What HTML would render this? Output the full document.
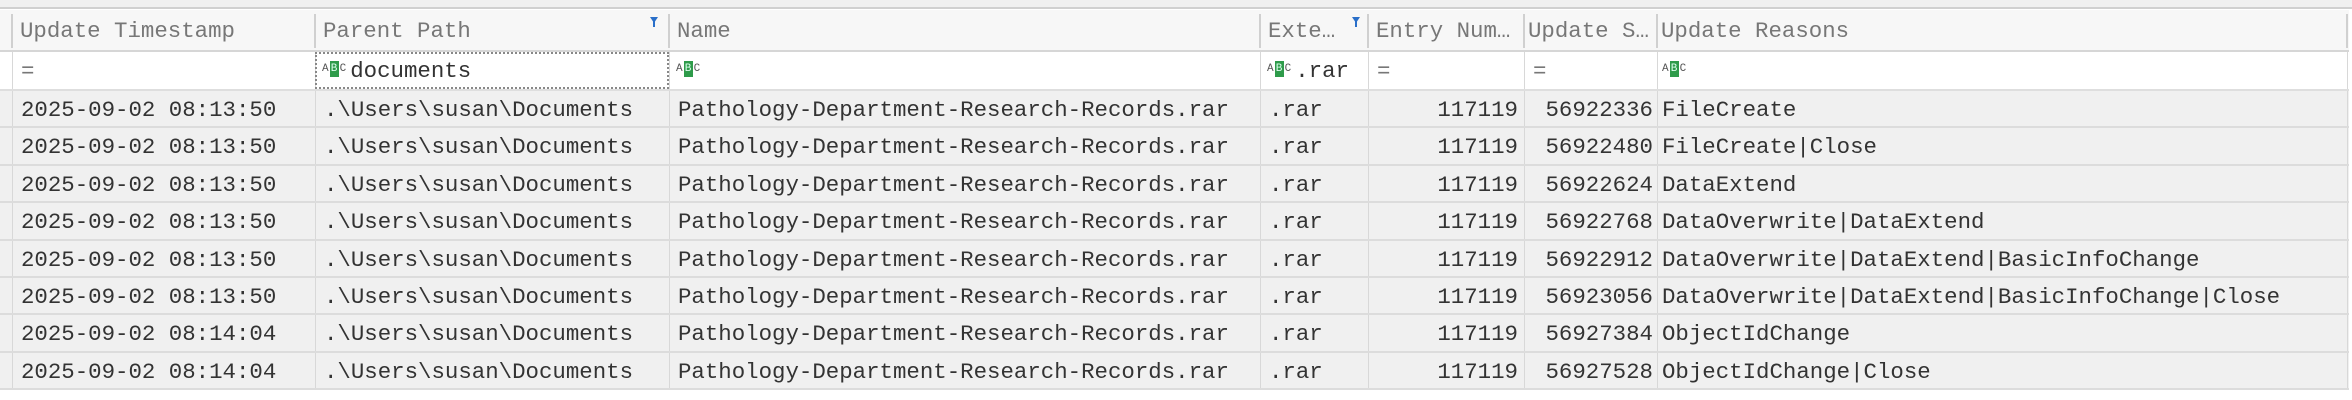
<!DOCTYPE html>
<html><head><meta charset="utf-8"><style>
*{margin:0;padding:0;box-sizing:border-box}
body{width:2352px;height:400px;background:#fff;overflow:hidden;position:relative;font-family:"Liberation Mono",monospace;font-size:22.4px;color:#333}
.top{position:absolute;left:0;top:0;width:2352px;height:9px;background:#f0f0f0;border-bottom:2px solid #d0d0d0}
.hdr{position:absolute;left:0;top:10px;width:2349px;height:42px;background:#f7f7f7;border-bottom:2px solid #d6d6d6}
.flt{position:absolute;left:0;top:52px;width:2349px;height:39px;background:#fff;border-bottom:2px solid #dedede}
.row{position:absolute;left:0;width:2349px;height:37.4px;background:#f0f0f0;border-bottom:2px solid #dcdcdc}
.c{position:absolute;top:0;height:100%;white-space:nowrap;overflow:hidden;line-height:38px;padding-left:8px;border-left:1px solid #d8d8d8}
.hdr .c{color:#777;line-height:42px;border-left:none}
.hdr .sep{position:absolute;top:4px;width:2px;height:34px;background:#d0d0d0}
.r{text-align:right;padding-right:6px;padding-left:0}
.fun{position:absolute;top:7px;width:0;height:0;border-left:4px solid transparent;border-right:4px solid transparent;border-top:6px solid #2a6fc9}
.fun:after{content:"";position:absolute;left:-1px;top:-2px;width:2px;height:6px;background:#2a6fc9}
.abc{display:inline-block;vertical-align:middle;font-size:11px;line-height:16px;color:#555;margin-right:4px;position:relative;top:-2px}
.abc b{display:inline-block;background:#2e9b4a;color:#dfe;width:9px;height:16px;text-align:center;font-weight:normal;margin:0 1px}
.eq{color:#777}
.focus{outline:2px dotted #888;outline-offset:-2px}
</style></head><body>
<div class="top"></div>
<div class="hdr">
<div class="sep" style="left:11px"></div><div class="c" style="left:12px;width:303px">Update Timestamp</div>
<div class="sep" style="left:314px"></div><div class="c" style="left:315px;width:354px">Parent Path</div><div class="fun" style="left:650px"></div>
<div class="sep" style="left:668px"></div><div class="c" style="left:669px;width:591px">Name</div>
<div class="sep" style="left:1259px"></div><div class="c" style="left:1260px;width:108px">Exte…</div><div class="fun" style="left:1352px"></div>
<div class="sep" style="left:1367px"></div><div class="c" style="left:1368px;width:156px">Entry Num…</div>
<div class="sep" style="left:1523px"></div><div class="c" style="left:1524px;width:133px;padding-left:4px">Update S…</div>
<div class="sep" style="left:1656px"></div><div class="c" style="left:1657px;width:690px;padding-left:4px">Update Reasons</div>
<div class="sep" style="left:2346px"></div>
</div>
<div class="flt">
<div class="c eq" style="left:12px;width:303px">=</div>
<div class="c focus" style="left:315px;width:354px;padding-left:6px"><span class="abc">A<b>B</b>C</span>documents</div>
<div class="c" style="left:669px;width:591px;padding-left:6px"><span class="abc">A<b>B</b>C</span></div>
<div class="c" style="left:1260px;width:108px;padding-left:6px"><span class="abc">A<b>B</b>C</span>.rar</div>
<div class="c eq" style="left:1368px;width:156px">=</div>
<div class="c eq" style="left:1524px;width:133px">=</div>
<div class="c" style="left:1657px;width:690px;padding-left:4px"><span class="abc">A<b>B</b>C</span></div>
<div class="c" style="left:2347px;width:2px"></div>
</div>
<div id="rows"></div>
<script>
var d=[["08:13:50","56922336","FileCreate"],["08:13:50","56922480","FileCreate|Close"],["08:13:50","56922624","DataExtend"],["08:13:50","56922768","DataOverwrite|DataExtend"],["08:13:50","56922912","DataOverwrite|DataExtend|BasicInfoChange"],["08:13:50","56923056","DataOverwrite|DataExtend|BasicInfoChange|Close"],["08:14:04","56927384","ObjectIdChange"],["08:14:04","56927528","ObjectIdChange|Close"]];
var h="";
d.forEach(function(r,i){
h+='<div class="row" style="top:'+(91+i*37.4)+'px">'+
'<div class="c" style="left:12px;width:303px">2025-09-02 '+r[0]+'</div>'+
'<div class="c" style="left:315px;width:354px">.\\Users\\susan\\Documents</div>'+
'<div class="c" style="left:669px;width:591px">Pathology-Department-Research-Records.rar</div>'+
'<div class="c" style="left:1260px;width:108px">.rar</div>'+
'<div class="c r" style="left:1368px;width:156px">117119</div>'+
'<div class="c r" style="left:1524px;width:133px;padding-right:4px">'+r[1]+'</div>'+
'<div class="c" style="left:1657px;width:690px;padding-left:4px">'+r[2]+'</div>'+
'<div class="c" style="left:2347px;width:2px"></div></div>';
});
document.getElementById("rows").innerHTML=h;
</script>
</body></html>
